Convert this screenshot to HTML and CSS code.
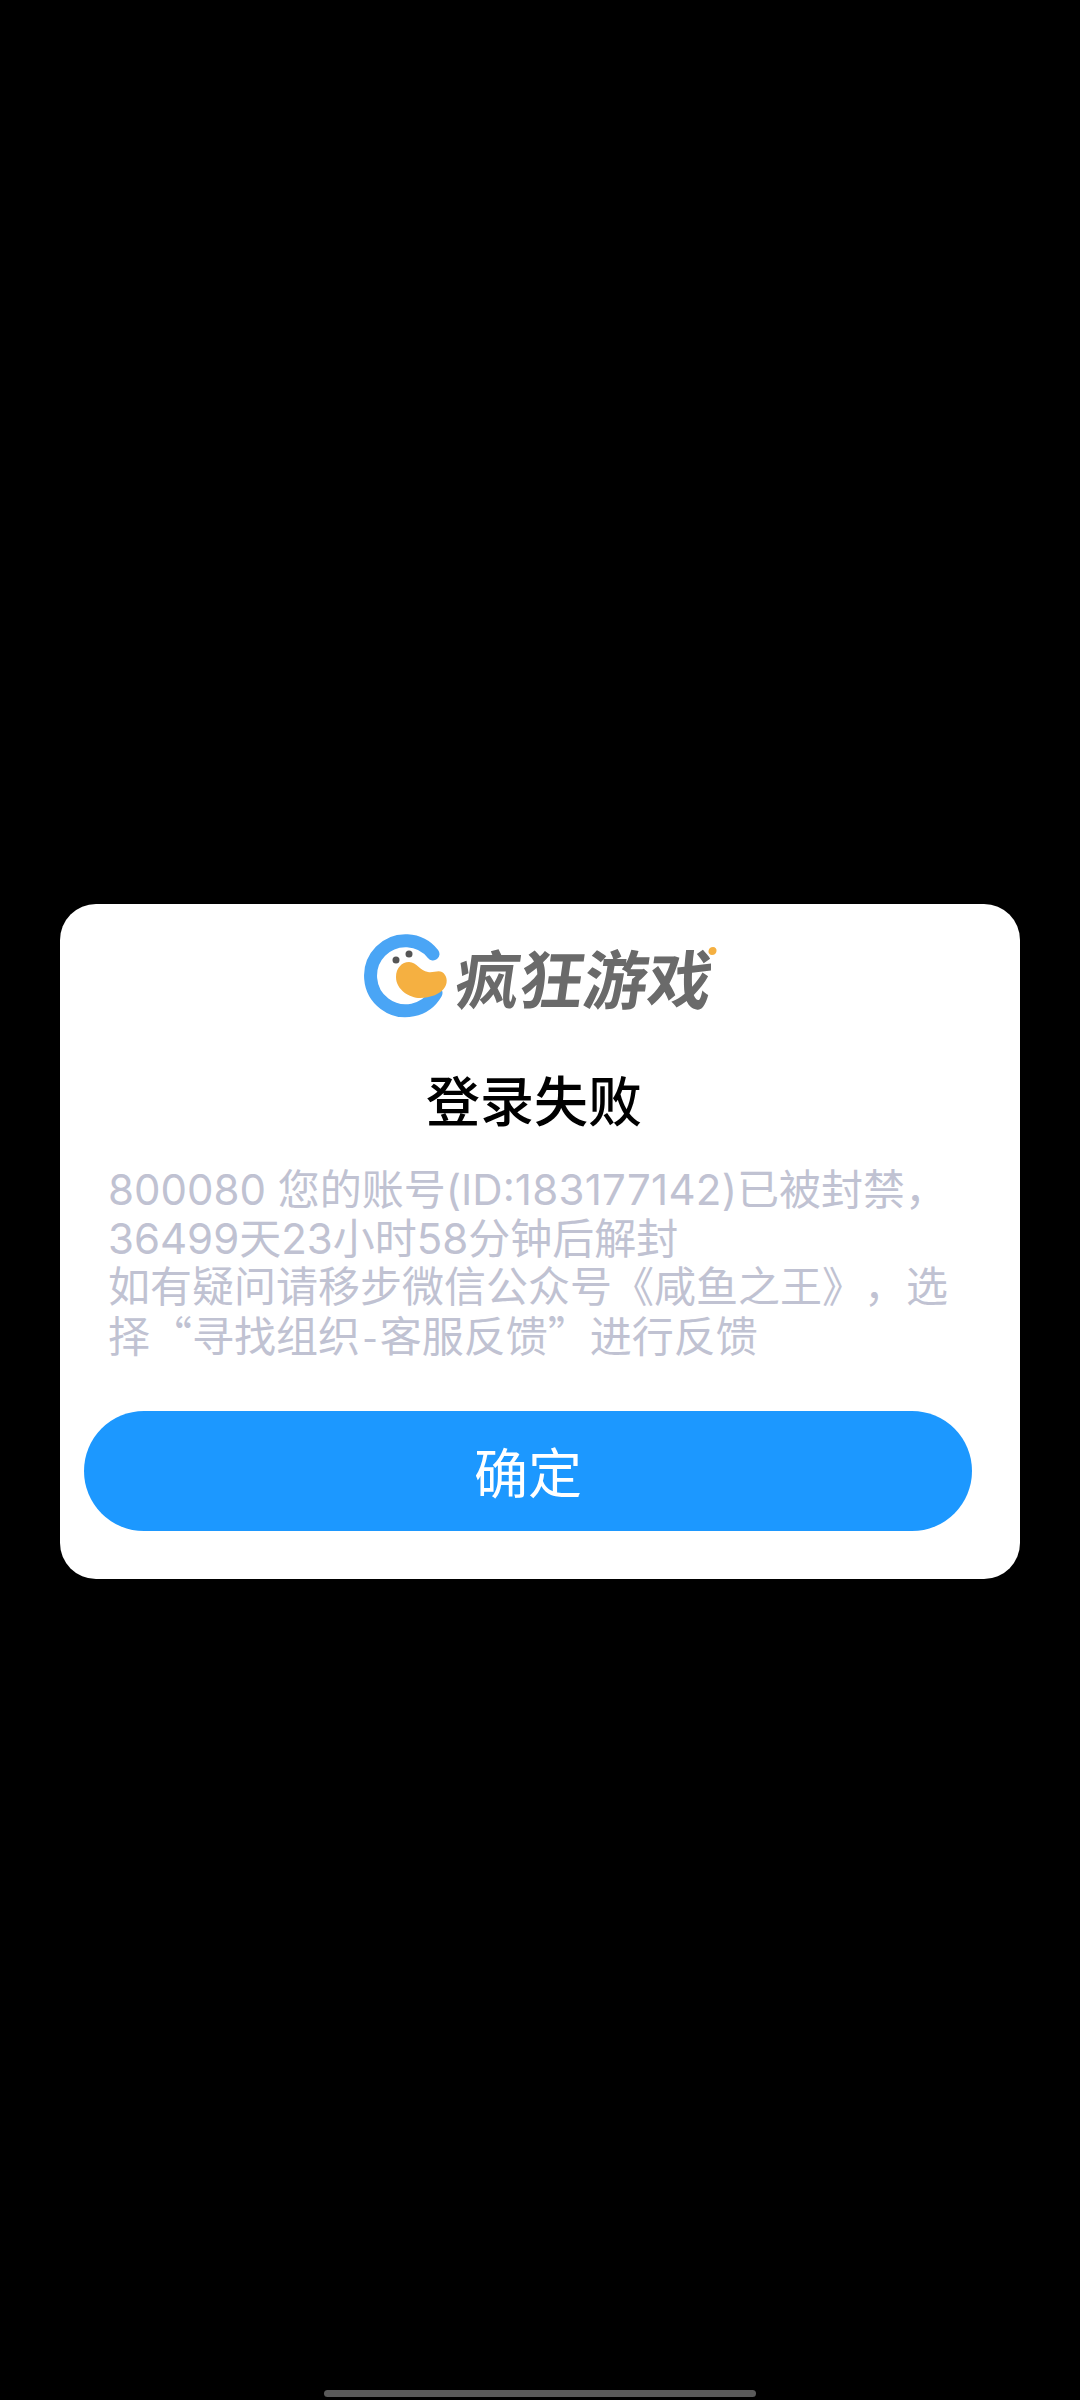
FILE: index.html
```html
<!DOCTYPE html>
<html lang="zh-CN">

<head>
  <meta charset="UTF-8">
  <meta name="viewport" content="width=device-width, initial-scale=1.0">
  <title>登录失败</title>
  <link rel="stylesheet" href="styles.css">
</head>

<body>
  <div class="page">
    <div class="dialog">
      <div class="logo">
        <svg class="logo-icon" width="92" height="92" viewBox="0 0 92 92">
          <path d="M73 24A35 35 0 1 0 76 63" fill="none" stroke="#4aa5f5" stroke-width="13" stroke-linecap="round"/>
          <path d="M36 47C36 38 42 32 49 32C57 32 60 41 68 42C73 43 78 40 82 42C87 45 88 52 85 57C81 64 70 68 60 68C50 68 36 60 36 47Z" fill="#f5b041"/>
          <circle cx="36" cy="30" r="3.5" fill="#555"/>
          <circle cx="49" cy="24" r="3.5" fill="#555"/>
        </svg>
        <span class="logo-text">疯狂游戏<i class="logo-dot"></i></span>
      </div>
      <div class="title">登录失败</div>
      <div class="message">
        <p>800080 您的账号(ID:<span class="uid">183177142</span>)已被封禁，</p>
        <p>36499天23小时58分钟后解封</p>
        <p>如有疑问请移步微信公众号《咸鱼之王》，选</p>
        <p class="cjk">择“寻找组织&#8202;-&#8202;客服反馈”进行反馈</p>
      </div>
      <div class="btn">确定</div>
    </div>
    <div class="home-bar"></div>
  </div>
</body>

</html>
```

FILE: styles.css
```css
* {
  padding: 0;
  margin: 0;
  box-sizing: border-box;
}

html,
body {
  height: 2400px;
  background: #000;
}

body {
  font-family: "Inter", "Noto Sans CJK SC", sans-serif;
}

.page {
  display: flex;
  flex-direction: column;
  height: 2400px;
  padding-top: 904px;
  overflow: hidden;
}

.dialog {
  width: 960px;
  height: 675px;
  margin-left: 60px;
  padding: 26px 48px 49px 24px;
  background: #fff;
  border-radius: 36px;
}

.logo {
  display: flex;
  align-items: center;
  height: 92px;
  padding-left: 276px;
}

.logo-text {
  position: relative;
  margin-left: 5px;
  font-family: "Noto Sans CJK SC", sans-serif;
  font-size: 64px;
  font-weight: 700;
  line-height: 92px;
  color: #6a6a6a;
  transform: skewX(-8deg);
}

.logo-dot {
  position: absolute;
  top: 17px;
  right: 0;
  width: 8px;
  height: 8px;
  background: #f5b041;
  border-radius: 50%;
}

.title {
  margin-top: 42px;
  padding-left: 12px;
  font-family: "Noto Sans CJK SC", sans-serif;
  font-size: 54px;
  font-weight: 500;
  line-height: 70px;
  text-align: center;
  color: #000;
}

.message {
  margin-top: 32px;
  padding-left: 24px;
  font-size: 42px;
  font-weight: 400;
  line-height: 48.5px;
  white-space: nowrap;
  text-spacing-trim: space-all;
  color: #c0c2d2;
}

.message .cjk {
  margin-top: -2px;
  font-family: "Noto Sans CJK SC", sans-serif;
}

.uid {
  letter-spacing: .3px;
}

.btn {
  width: 888px;
  height: 120px;
  margin-top: 53px;
  font-family: "Noto Sans CJK SC", sans-serif;
  font-size: 54px;
  line-height: 120px;
  text-align: center;
  color: #fff;
  background: #1c98ff;
  border-radius: 60px;
}

.home-bar {
  width: 432px;
  height: 7px;
  margin: auto 0 3px 324px;
  background: #5a5a5a;
  border-radius: 4px;
}
```
